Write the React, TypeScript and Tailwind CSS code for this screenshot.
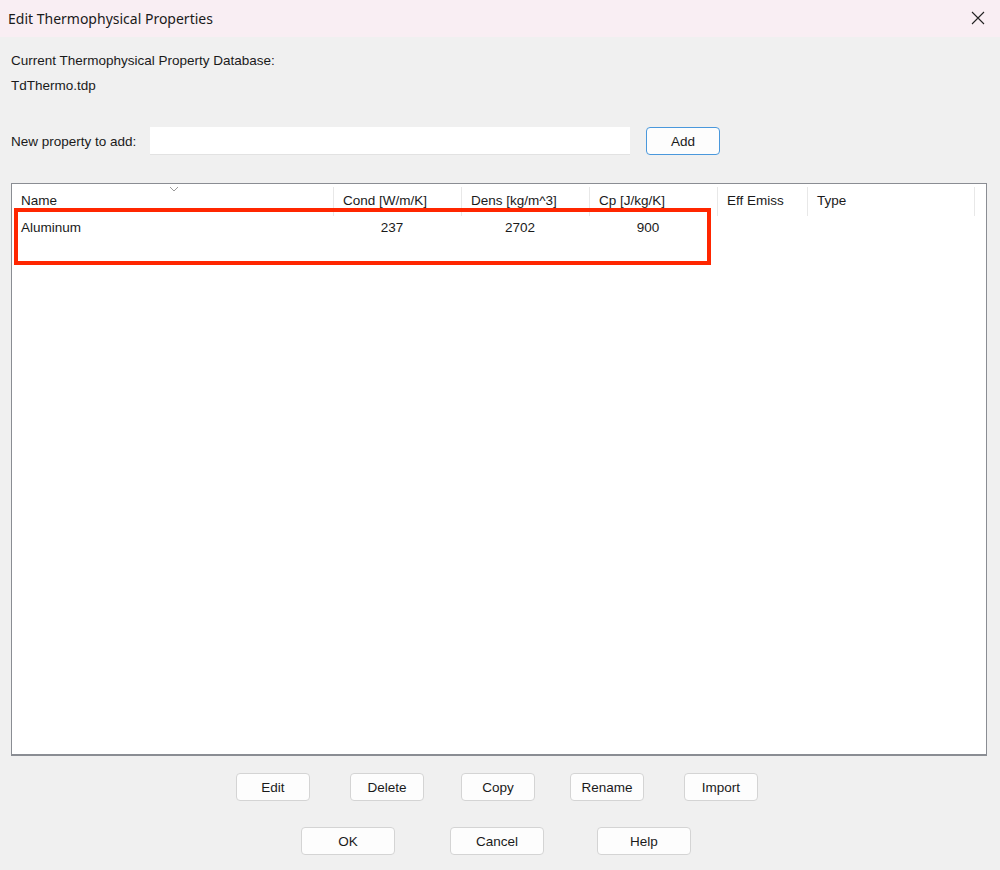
import React from "react";

const font = { fontFamily: '"Liberation Sans", Arial, sans-serif' };

function Btn({ label, w, h, className = "" }: { label: string; w: string; h: string; className?: string }) {
  return (
    <button
      className={`${w} ${h} ${className} shrink-0 rounded-[4px] border border-[#d4d4d4] bg-[#fdfdfd] pt-[2px] text-[13.5px] text-[#1a1a1a] flex items-center justify-center`}
    >
      {label}
    </button>
  );
}

export default function App() {
  const cols = [
    { label: "Name", w: "w-[322px]" },
    { label: "Cond [W/m/K]", w: "w-[128px]" },
    { label: "Dens [kg/m^3]", w: "w-[128px]" },
    { label: "Cp [J/kg/K]", w: "w-[128px]" },
    { label: "Eff Emiss", w: "w-[90px]" },
    { label: "Type", w: "w-[167px]" },
  ];
  return (
    <div className="w-[1000px] h-[870px] bg-[#f0f0f0] flex flex-col overflow-hidden" style={font}>
      {/* title bar */}
      <div className="h-[37px] shrink-0 bg-[#f9eef3] flex items-center justify-between pl-[8px] pr-[15px]">
        <span className="text-[14px] text-[#1a1a1a]" style={{ fontFamily: '"Noto Sans", "Open Sans", sans-serif' }}>
          Edit Thermophysical Properties
        </span>
        <svg width="14" height="14" viewBox="0 0 14 14" className="mt-[-2px]">
          <path d="M1 1 L13 13 M13 1 L1 13" stroke="#222" strokeWidth="1.1" fill="none" />
        </svg>
      </div>

      <div className="flex flex-col pl-[11px]">
        <div className="mt-[16px] h-[16px] leading-[16px] text-[13.5px] text-[#1a1a1a]">Current Thermophysical Property Database:</div>
        <div className="mt-[9px] h-[16px] leading-[16px] text-[13.5px] text-[#1a1a1a]">TdThermo.tdp</div>

        <div className="mt-[33px] flex items-center h-[28px]">
          <span className="w-[139px] pt-[2px] text-[13.5px] text-[#1a1a1a]">New property to add:</span>
          <div className="w-[480px] h-[28px] bg-white border-b border-[#e2e2e2]" />
          <button className="ml-[16px] w-[74px] h-[28px] rounded-[4px] border border-[#4a98dc] bg-[#fdfdfd] pt-[2px] text-[13.5px] text-[#1a1a1a] flex items-center justify-center">
            Add
          </button>
        </div>

        {/* list */}
        <div className="relative mt-[28px] w-[976px] h-[573px] bg-white border border-[#8a8d93] border-b-2">
          <div className="flex h-[32px]">
            {cols.map((c) => (
              <div
                key={c.label}
                className={`${c.w} h-full relative flex items-center pl-[9px] pt-[2px] text-[13.5px] text-[#1a1a1a]`}
              >
                {c.label}
                <div className="absolute right-0 top-[3px] bottom-0 w-px bg-[#e8e8e8]" />
              </div>
            ))}
          </div>
          <svg className="absolute left-[157px] top-[2px]" width="10" height="6" viewBox="0 0 10 6">
            <path d="M1 1 L5 5 L9 1" stroke="#9a9a9a" strokeWidth="1" fill="none" />
          </svg>
          <div className="flex h-[22px] items-center pt-[2px] text-[13.5px] text-[#1a1a1a]">
            <div className="w-[322px] pl-[9px]">Aluminum</div>
            <div className="w-[128px] pr-[12px] text-center">237</div>
            <div className="w-[128px] pr-[12px] text-center">2702</div>
            <div className="w-[128px] pr-[12px] text-center">900</div>
          </div>
          <div className="absolute left-[2px] top-[24px] w-[697px] h-[57px] border-[4px] border-[#ff2600]" />
        </div>

        {/* action buttons */}
        <div className="mt-[17px] flex">
          <Btn label="Edit" w="w-[74px]" h="h-[28px]" className="ml-[225px]" />
          <Btn label="Delete" w="w-[74px]" h="h-[28px]" className="ml-[40px]" />
          <Btn label="Copy" w="w-[74px]" h="h-[28px]" className="ml-[37px]" />
          <Btn label="Rename" w="w-[74px]" h="h-[28px]" className="ml-[35px]" />
          <Btn label="Import" w="w-[74px]" h="h-[28px]" className="ml-[40px]" />
        </div>
        <div className="mt-[26px] flex">
          <Btn label="OK" w="w-[94px]" h="h-[28px]" className="ml-[290px]" />
          <Btn label="Cancel" w="w-[94px]" h="h-[28px]" className="ml-[55px]" />
          <Btn label="Help" w="w-[94px]" h="h-[28px]" className="ml-[53px]" />
        </div>
      </div>
    </div>
  );
}
